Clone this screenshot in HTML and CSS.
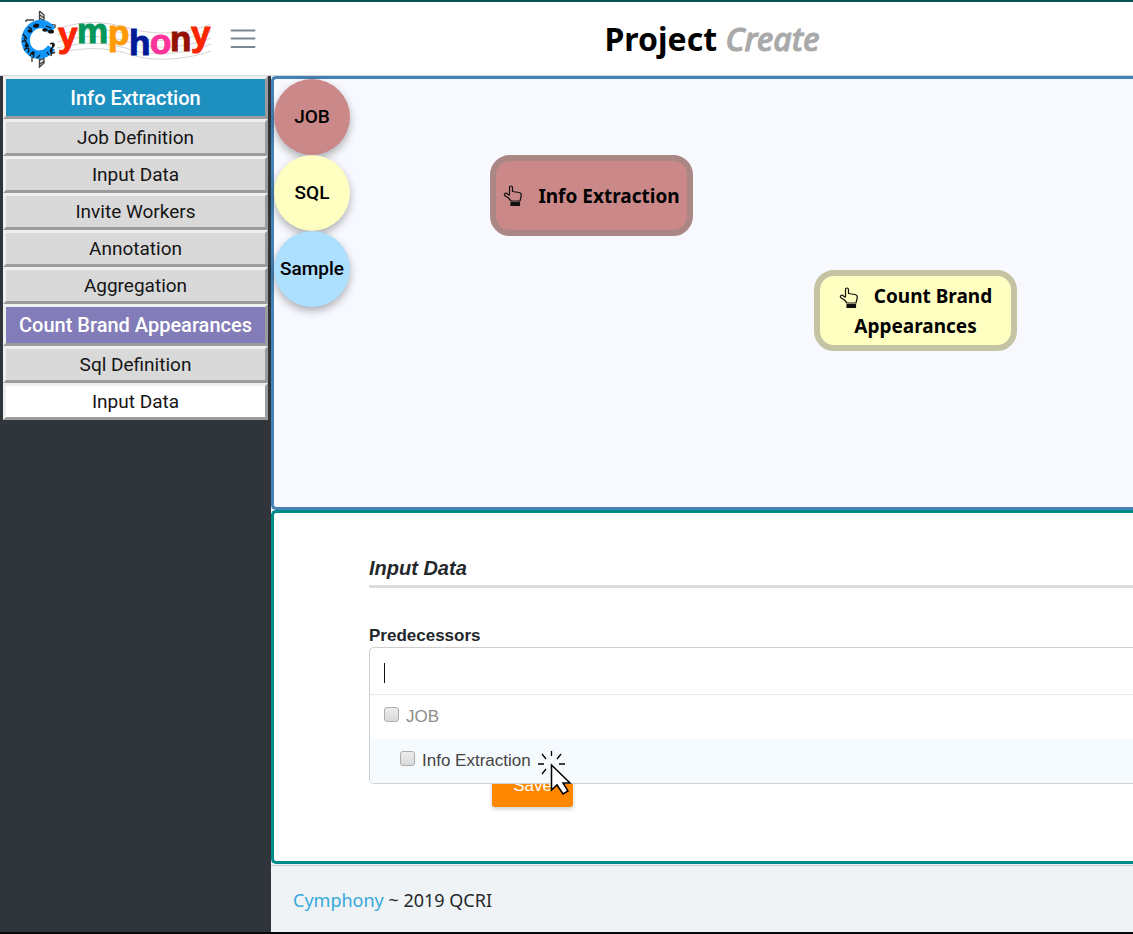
FILE: index.html
```html
<!DOCTYPE html>
<html lang="en">
<head>
<meta charset="utf-8">
<title>Cymphony - Project Create</title>
<link rel="stylesheet" href="styles.css">
</head>
<body>
<header class="topbar">
  <div class="brand-area">
    <a class="brand" href="#">
      <svg class="logo" width="192" height="58" viewBox="20 10 192 58" role="img" aria-label="Cymphony">
        <g class="staff-lines">
          <path d="M57 29C90 18 110 23 132 29S185 35 211 24"/>
          <path d="M57 35C90 26 110 29 132 36S185 42 211 31"/>
          <path d="M57 42C90 33 110 36 132 43S185 48 211 38"/>
          <path d="M57 48C90 40 110 43 132 50S185 54 211 44"/>
          <path d="M57 53C90 46 110 48 132 55S185 60 211 51"/>
        </g>
        <path class="ornament" d="M39.500 11V22M39.500 11L44 15V24M40 15L44 18M40 18L44 21M39.500 56V67L44 63V56M40 60L44 58M40 64L44 61M26 20H34M26 20V22M32 56V62M47 24L55 25V28"/>
        <path class="clef" d="M51.500 30.500C46 22 36 22 30 29C24.500 35 24 44 29 50C35 57 46 56 51.500 47.500"/>
        <g class="notes">
          <path d="M23 34L27 39M22 42C25 38 28 43 25 47M24 50C28 46 30 49 28 53M30 56C31 51 35 52 33 58M28 27L32 29M35 24L39 25M46 26L51 28M24 38L28 46M37 58L40 55"/>
          <path d="M50 44C54 42 56 45 52 48C48 51 52 55 55 52M53 43L51 56M47 52L49 55"/>
          <ellipse cx="30" cy="31" rx="2.500" ry="1.800"/><ellipse cx="36" cy="26" rx="3" ry="1.800"/><ellipse cx="45" cy="30" rx="2.800" ry="1.800"/><ellipse cx="51" cy="31.500" rx="3" ry="2"/><circle cx="27" cy="46" r="1.800"/><circle cx="33" cy="53" r="1.800"/>
        </g>
        <text class="letter red" x="58" y="47">y</text>
        <text class="letter green" x="77" y="43">m</text>
        <text class="letter amber" x="108" y="45">p</text>
        <text class="letter navy" x="129" y="55">h</text>
        <text class="letter pink" x="150" y="54">o</text>
        <text class="letter maroon" x="170" y="51">n</text>
        <text class="letter red" x="191" y="46">y</text>
      </svg>
    </a>
    <button class="menu-toggle" type="button" aria-label="Toggle menu">
      <svg width="26" height="22" viewBox="0 0 26 22"><path d="M1.500 2.500H24.500M1.500 10.500H24.500M1.500 19H24.500"/></svg>
    </button>
  </div>
  <h1 class="page-title">Project <em>Create</em></h1>
</header>

<div class="layout">
  <nav class="sidebar">
    <button class="side-item head job-head" type="button">Info Extraction</button>
    <button class="side-item" type="button">Job Definition</button>
    <button class="side-item" type="button">Input Data</button>
    <button class="side-item" type="button">Invite Workers</button>
    <button class="side-item" type="button">Annotation</button>
    <button class="side-item" type="button">Aggregation</button>
    <button class="side-item head sql-head" type="button">Count Brand Appearances</button>
    <button class="side-item" type="button">Sql Definition</button>
    <button class="side-item current" type="button">Input Data</button>
  </nav>

  <main class="content">
    <section class="canvas">
      <div class="palette">
        <button class="chip job" type="button">JOB</button>
        <button class="chip sql" type="button">SQL</button>
        <button class="chip sample" type="button">Sample</button>
      </div>
      <div class="node node-job">
        <svg class="hand" width="20" height="22" viewBox="0 0 20 22"><path d="M6.500 10V2.800Q6.500 1 8 1T9.500 2.800V6.500L16 7.500Q18.500 8 18.300 10.500L17 16H8L5.500 13L2 10.800Q.6 9.500 2 8.500T4.500 9L6.500 10.500"/><path class="cuff" d="M8 17.500H16.500V20.500H8Z"/></svg><span>Info Extraction</span>
      </div>
      <div class="node node-sql">
        <svg class="hand" width="20" height="22" viewBox="0 0 20 22"><path d="M6.500 10V2.800Q6.500 1 8 1T9.500 2.800V6.500L16 7.500Q18.500 8 18.300 10.500L17 16H8L5.500 13L2 10.800Q.6 9.500 2 8.500T4.500 9L6.500 10.500"/><path class="cuff" d="M8 17.500H16.500V20.500H8Z"/></svg><span>Count Brand Appearances</span>
      </div>
    </section>

    <form class="panel">
      <h2 class="panel-title">Input Data</h2>
      <label class="field-label" for="pred">Predecessors</label>
      <div class="picker">
        <input class="picker-input" id="pred" type="text" autocomplete="off">
        <span class="caret"></span>
        <div class="picker-list">
          <label class="option group"><input class="tick" type="checkbox"><span>JOB</span></label>
          <label class="option child"><input class="tick" type="checkbox"><span>Info Extraction</span></label>
        </div>
        <svg class="cursor" width="30" height="46" viewBox="0 0 30 46" aria-hidden="true">
          <path class="spark" d="M14.500 1V6M5 4L9 9M24 4L20 9M1 14H7M22 14H28M5 24L9 19"/>
          <path class="arrow" d="M14.500 15V40L20 35L26 44L31 41L26 33H33Z"/>
        </svg>
      </div>
      <button class="save" type="button">Save</button>
    </form>

    <footer class="footer"><a href="#">Cymphony</a> ~ 2019 QCRI</footer>
  </main>
</div>
</body>
</html>
```
FILE: styles.css
```css
* { box-sizing: border-box; }

body {
  margin: 0;
  min-height: 100vh;
  display: flex;
  flex-direction: column;
  border-top: 2px solid #075055;
  border-bottom: 2px solid #080808;
  background: #fff;
  color: #23282c;
  font-family: "Liberation Sans", Arial, sans-serif;
}

button { cursor: pointer; }

.topbar {
  display: grid;
  grid-template-columns: 271px 1fr;
  align-items: center;
  height: 74px;
  border-bottom: 1px solid #d5d9dc;
}

.brand-area {
  display: flex;
  align-items: center;
  gap: 18px;
  padding-left: 20px;
}

.brand, .logo { display: block; }

.staff-lines path { fill: none; stroke: #d4d4d4; stroke-width: 1; }
.ornament { fill: none; stroke: #444; stroke-width: 1.4; }
.clef { fill: none; stroke: #1295f8; stroke-width: 8.5; }
.notes path { fill: none; stroke: #111; stroke-width: 1.3; }
.notes circle, .notes ellipse { fill: #111; }
.letter { font: bold 35px "Liberation Sans", Arial, sans-serif; stroke-width: 1; }
.red { fill: #fb2500; stroke: #fb2500; }
.green { fill: #059659; stroke: #059659; }
.amber { fill: #ff9c05; stroke: #ff9c05; }
.navy { fill: #001a98; stroke: #001a98; }
.pink { fill: #ff3399; stroke: #ff3399; }
.maroon { fill: #941100; stroke: #941100; }

.menu-toggle {
  padding: 0;
  border: 0;
  background: none;
}
.menu-toggle svg { display: block; }
.menu-toggle path { stroke: #7b8794; stroke-width: 2; stroke-linecap: round; }

.page-title {
  margin: 0;
  padding: 0 0 0 20px;
  text-align: center;
  color: #000;
  font: bold 32px/40px "Noto Sans", "Open Sans", sans-serif;
}
.page-title em {
  color: #a9a9a9;
  font-weight: 500;
  -webkit-text-stroke: 1px #a9a9a9;
}

.layout { flex: 1; display: flex; }

.sidebar {
  flex: 0 0 271px;
  display: flex;
  flex-direction: column;
  padding: 0 3px 0 3px;
  background: #2f353a;
}

.side-item {
  height: 37px;
  padding: 0;
  border: 3px solid;
  border-color: #efefef #9c9c9c #9c9c9c #efefef;
  background: #d9d9d9;
  color: #151515;
  font: 19px/24px Roboto, sans-serif;
}
.side-item.head { height: 43px; color: #fff; font-size: 20px; font-weight: 500; }
.side-item.sql-head { height: 42px; background: #827cb9; }
.side-item.job-head { background: #1e90c0; }
.side-item.current { background: #fff; }

.content {
  flex: 1;
  min-width: 0;
  display: flex;
  flex-direction: column;
  background: #f0f3f5;
}

.canvas {
  position: relative;
  height: 434px;
  border: 3px solid #4682b4;
  border-right: 0;
  border-radius: 5px 0 0 5px;
  background: #f8f9ff;
}

.palette {
  display: flex;
  flex-direction: column;
  align-items: flex-start;
}

.chip {
  width: 76px;
  height: 76px;
  padding: 0;
  border: 0;
  border-radius: 50%;
  box-shadow: 0 4px 8px rgba(0, 0, 0, .3);
  color: #000;
  font: 500 19px/24px Roboto, sans-serif;
}
.job { background: #cb8888; }
.sql { background: #ffffc2; }
.sample { background: #addfff; }

.node {
  position: absolute;
  display: flex;
  align-items: center;
  justify-content: center;
  width: 203px;
  height: 81px;
  border: 6px solid;
  border-radius: 20px;
  color: #000;
  text-align: center;
  font: bold 19px/30px "Noto Sans", "Open Sans", sans-serif;
}
.node-job { left: 216px; top: 76px; gap: 15px; border-color: #aa8785; background: #cb8888; }
.node-sql { left: 540px; top: 191px; display: block; padding: 5px 8px; border-color: #c4c4a5; background: #ffffc2; }
.node-sql .hand { margin-right: 15px; vertical-align: middle; }
.hand { flex: none; }
.hand path { fill: none; stroke: #111; stroke-width: 1.2; stroke-linejoin: round; }
.hand .cuff { fill: #111; }

.panel {
  flex: 1;
  padding: 43px 0 54px 95px;
  border: 3px solid #008b8b;
  border-right: 0;
  border-radius: 5px 0 0 5px;
  background: #fff;
}

.panel-title {
  margin: 0 0 37px;
  padding-bottom: 5px;
  border-bottom: 3px solid #dcdcdc;
  font-size: 20px;
  line-height: 24px;
  font-style: italic;
}

.field-label {
  display: block;
  font-size: 17px;
  line-height: 22px;
  font-weight: bold;
}

.picker { position: relative; }

.picker-input {
  display: block;
  width: 100%;
  height: 48px;
  padding: 0 14px;
  border: 1px solid #cfcfcf;
  border-right: 0;
  border-bottom-color: #e8e8e8;
  border-radius: 5px 0 0 0;
  outline: 0;
  font: 17px "Liberation Sans", Arial, sans-serif;
}

.caret {
  position: absolute;
  left: 15px;
  top: 16px;
  width: 1px;
  height: 20px;
  background: #111;
}

.picker-list {
  position: absolute;
  left: 0;
  right: 0;
  top: 48px;
  overflow: hidden;
  border: 1px solid #cfcfcf;
  border-width: 0 0 1px 1px;
  border-radius: 0 0 0 5px;
  background: #fff;
}

.option {
  display: flex;
  align-items: center;
  gap: 7px;
  height: 44px;
  padding-left: 14px;
  font-size: 17px;
}
.option.group { color: #8c8c8c; }
.option.child { padding-left: 30px; background: #f5fafe; color: #444; }

.tick {
  appearance: none;
  width: 15px;
  height: 15px;
  margin: 0 0 6px;
  border: 1px solid #adadad;
  border-radius: 3px;
  background: linear-gradient(#ececec, #dadada);
}
.tick:checked { background: #1e90c0; }

.cursor {
  position: absolute;
  left: 168px;
  top: 103px;
  overflow: visible;
}
.spark { fill: none; stroke: #000; stroke-width: 1.3; }
.arrow { fill: #fff; stroke: #000; stroke-width: 1.5; }

.save {
  display: block;
  width: 81px;
  height: 42px;
  margin: 70px 0 0 123px;
  padding: 0;
  border: 0;
  border-radius: 3px;
  background: #ff8800;
  box-shadow: 0 2px 4px rgba(0, 0, 0, .2);
  color: #fff;
  font: 17px "Liberation Sans", Arial, sans-serif;
}

.footer {
  height: 67px;
  margin-top: 1px;
  padding: 0 22px;
  border-top: 1px solid #c8ced3;
  font: 18px/68px "Noto Sans", "Open Sans", sans-serif;
}
.footer a { color: #36a9dc; text-decoration: none; }
```
